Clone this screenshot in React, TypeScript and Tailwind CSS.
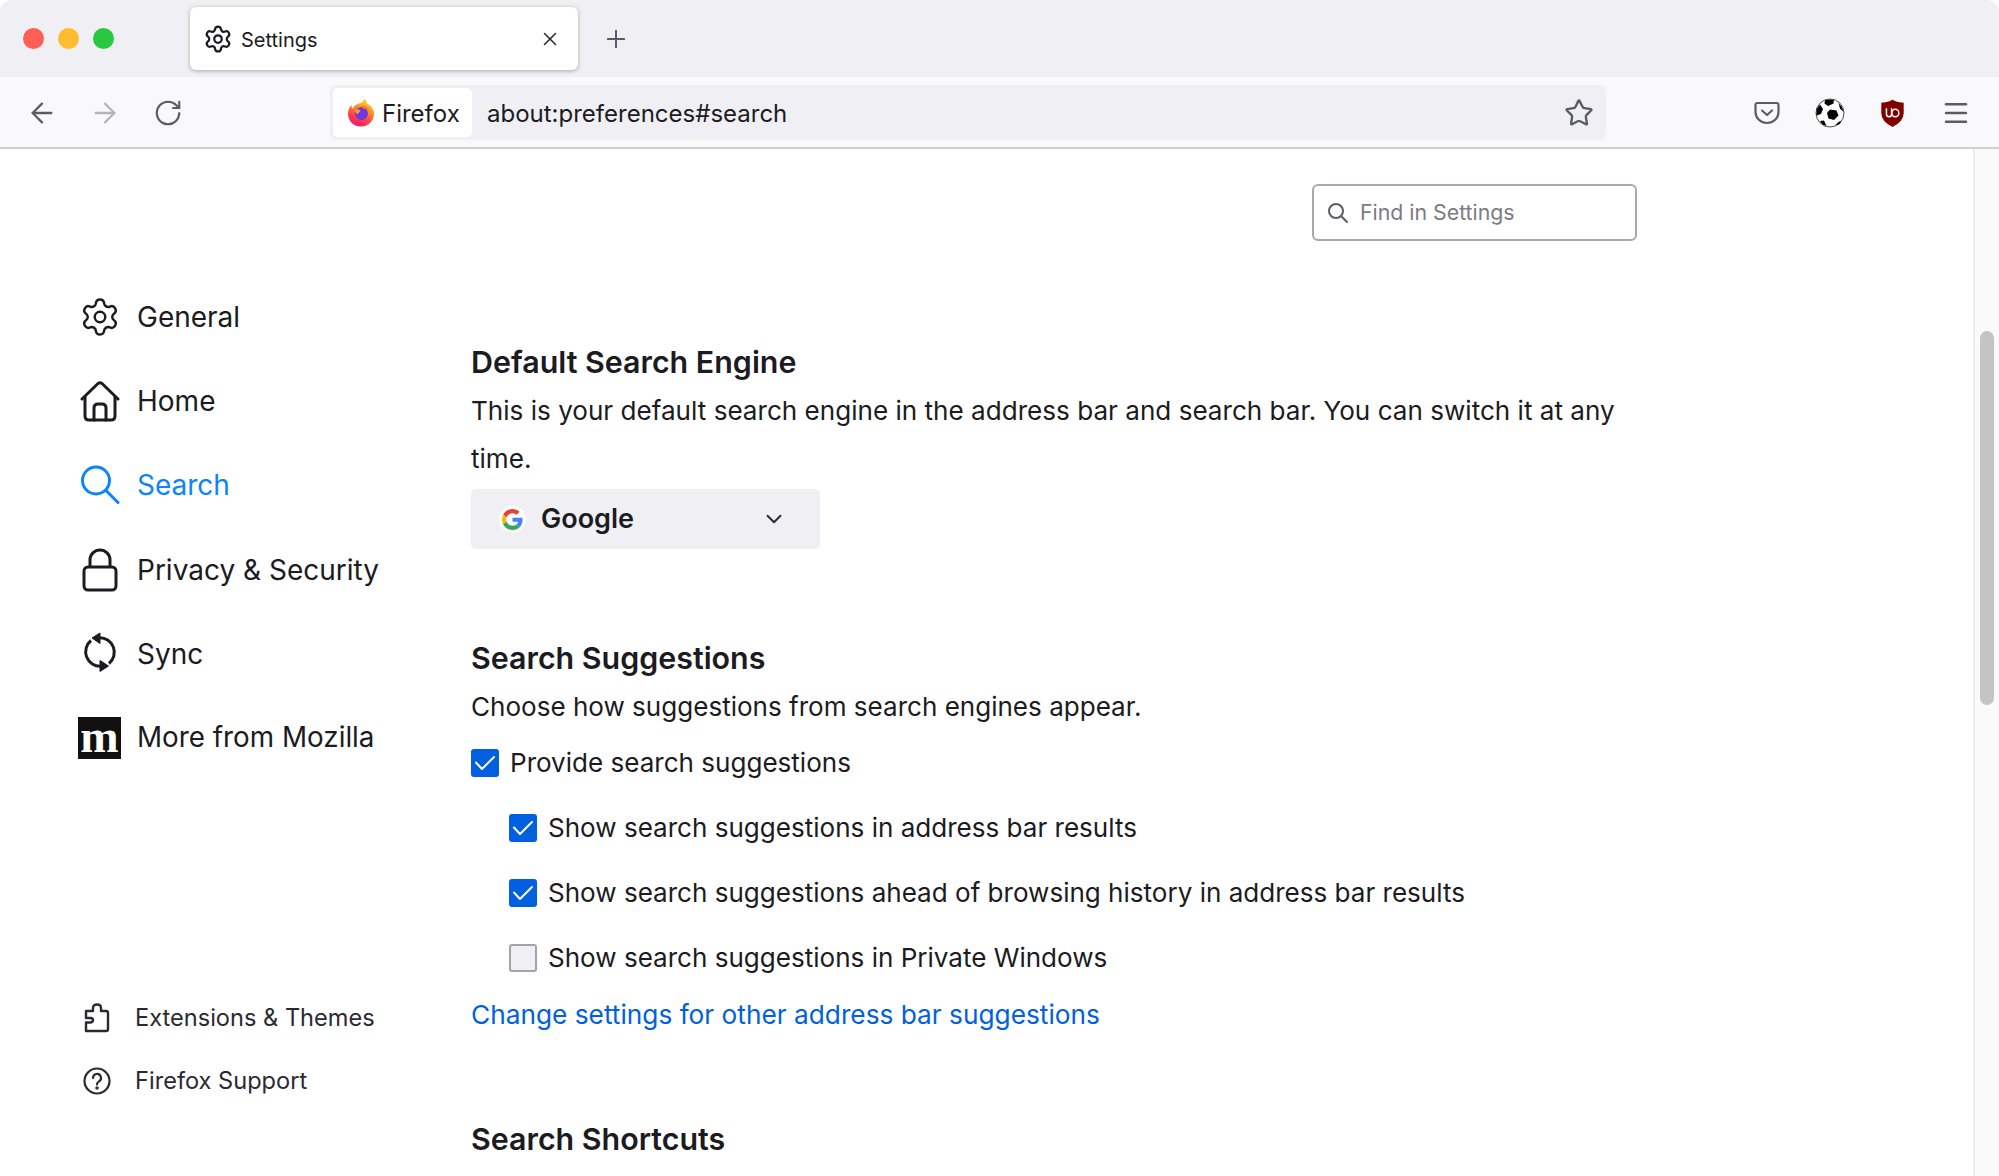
import React from "react";
import { Settings, X, Plus, ArrowLeft, ArrowRight, RotateCw, Star, ChevronDown, Menu } from "lucide-react";

const Gear = ({ size, sw, color = "#1c1b22" }: { size: number; sw: number; color?: string }) => (
  <Settings size={size} strokeWidth={sw} color={color} />
);

const HomeIcon = () => (
  <svg width="40" height="42" viewBox="0 0 40 42" fill="none" stroke="#1c1b22" strokeWidth="3" strokeLinecap="round" strokeLinejoin="round">
    <path d="M2 19 L18 3.5 Q20 2 22 3.5 L38 19" />
    <path d="M5 17 V36 Q5 40 9 40 H31 Q35 40 35 36 V17" />
    <path d="M14 40 V28 Q14 24 18 24 H22 Q26 24 26 28 V40" />
  </svg>
);
const SearchIcon = () => (
  <svg width="40" height="40" viewBox="0 0 40 40" fill="none" stroke="#0a84ff" strokeWidth="3" strokeLinecap="round">
    <circle cx="16" cy="15.5" r="13.5" />
    <path d="M26 25.5 L38 37.5" />
  </svg>
);
const LockIcon = () => (
  <svg width="36" height="44" viewBox="0 0 36 44" fill="none" stroke="#1c1b22" strokeWidth="3">
    <rect x="2" y="19" width="32" height="23" rx="4" />
    <path d="M8 19 V12 a10 10 0 0 1 20 0 V19" />
  </svg>
);
const SyncIcon = () => (
  <svg width="34" height="44" viewBox="0 0 34 44" fill="none" stroke="#1c1b22" strokeWidth="3">
    <path d="M16 5.8 A14.5 14.5 0 0 1 26 31.5" />
    <path d="M18 34.2 A14.5 14.5 0 0 1 8 8.5" />
    <path d="M9 6 L17 1 V11.5 Z" fill="#1c1b22" strokeWidth="1" strokeLinejoin="round" />
    <path d="M25.5 34 L17 28.5 V39.5 Z" fill="#1c1b22" strokeWidth="1" strokeLinejoin="round" />
  </svg>
);
const Puzzle = () => (
  <svg width="26" height="30" viewBox="0 0 26 30" fill="none" stroke="#2b2a33" strokeWidth="2.4" strokeLinejoin="round">
    <path d="M2 28 H22 Q24 28 24 26 V10 Q24 8 22 8 H17 V5 Q17 1.5 13 1.5 Q9 1.5 9 5 V8 H2 V15 H6 Q9 15 9 17 Q9 19.5 6 19.5 H2 V28 Z" />
  </svg>
);
const Help = () => (
  <svg width="28" height="28" viewBox="0 0 28 28" fill="none" stroke="#2b2a33" strokeWidth="2.2" strokeLinecap="round">
    <circle cx="14" cy="14" r="12.5" />
    <path d="M10 11 a4 4 0 1 1 6 3.4 Q14 15.5 14 17.5" />
    <circle cx="14" cy="21" r="0.7" fill="#2b2a33" />
  </svg>
);
const Check = () => (
  <svg width="22" height="16" viewBox="0 0 22 16" fill="none" stroke="#fff" strokeWidth="2" strokeLinecap="round" strokeLinejoin="round">
    <path d="M2 7.5 L8 14 L20 2" />
  </svg>
);
const FirefoxLogo = () => (
  <svg width="28" height="29" viewBox="0 0 28 29">
    <defs>
      <linearGradient id="ffa" x1="0.75" y1="0" x2="0.35" y2="1">
        <stop offset="0" stopColor="#ffe226" />
        <stop offset="0.35" stopColor="#ff9a1f" />
        <stop offset="0.72" stopColor="#ff3d4a" />
        <stop offset="1" stopColor="#f5156c" />
      </linearGradient>
    </defs>
    <path d="M14 28.5 C6 28.5 1 22.5 1 15.5 C1 12 2.5 9 4.5 7 C4.5 9 5 10 6 10.5 C7 7 11 5.5 14 5 C16 3.5 17 2 17.5 0.5 C19 2.5 20 4 20 5.5 C24 7.5 27 11 27 15.5 C27 22.5 21.5 28.5 14 28.5 Z" fill="url(#ffa)" />
    <circle cx="14.5" cy="15.5" r="6.5" fill="#6e3bd8" />
    <path d="M8 12 C10.5 10.5 13 11.5 13.5 13.5 C12 14 11 15 11 16.5 C9.5 15.5 8 14 8 12 Z" fill="#ff9640" />
    <path d="M15 7.5 C19.5 7.5 23 11 23 15.5 C23 12.5 19.5 10 16 11 Z" fill="#ff7a2f" />
  </svg>
);
const GoogleIcon = () => (
  <span className="flex h-[27px] w-[27px] items-center justify-center rounded-full bg-white">
    <svg width="21" height="21" viewBox="0 0 48 48">
      <path fill="#EA4335" d="M24 9.5c3.54 0 6.71 1.22 9.21 3.6l6.85-6.85C35.9 2.38 30.47 0 24 0 14.62 0 6.51 5.38 2.56 13.22l7.98 6.19C12.43 13.72 17.74 9.5 24 9.5z" />
      <path fill="#4285F4" d="M46.98 24.55c0-1.57-.15-3.09-.38-4.55H24v9.02h12.94c-.58 2.96-2.26 5.48-4.78 7.18l7.73 6c4.51-4.18 7.09-10.36 7.09-17.65z" />
      <path fill="#FBBC05" d="M10.53 28.59c-.48-1.45-.76-2.99-.76-4.59s.27-3.14.76-4.59l-7.98-6.19C.92 16.46 0 20.12 0 24c0 3.88.92 7.54 2.56 10.78l7.97-6.19z" />
      <path fill="#34A853" d="M24 48c6.48 0 11.93-2.13 15.89-5.81l-7.73-6c-2.15 1.45-4.92 2.3-8.16 2.3-6.26 0-11.57-4.22-13.47-9.91l-7.98 6.19C6.51 42.62 14.62 48 24 48z" />
    </svg>
  </span>
);
const Pocket = () => (
  <svg width="26" height="24" viewBox="0 0 26 24" fill="none" stroke="#5b5b66" strokeWidth="2.2" strokeLinecap="round" strokeLinejoin="round">
    <path d="M3.5 2 H22.5 Q24.5 2 24.5 4 V11 A11.5 11 0 0 1 1.5 11 V4 Q1.5 2 3.5 2 Z" />
    <path d="M8 9.5 L13 14 L18 9.5" />
  </svg>
);
const Ball = () => (
  <svg width="30" height="30" viewBox="0 0 30 30">
    <circle cx="15" cy="15" r="14" fill="#fff" stroke="#222" strokeWidth="0.8" />
    <path d="M15 11.5 L21.5 12.5 L23.5 17.5 L19 22 L13.5 20.5 L12 15 Z" fill="#000" />
    <path d="M10 2 L19 1.5 L18.5 5.5 L13 8 L9.5 5.5 Z" fill="#000" />
    <path d="M1.5 11 L5 6.5 L8 11 L6 16 L1.5 17.5 Z" fill="#000" />
    <path d="M5 23 L9 22.5 L11.5 28 L7.5 26.5 Z" fill="#000" />
    <path d="M23.5 5 L27 9 L28.5 14 L25 10.5 Z" fill="#000" />
    <path d="M20 27.5 L24 23.5 L26.5 23.5 L24 26.5 Z" fill="#000" />
  </svg>
);
const Ubo = () => (
  <svg width="25" height="28" viewBox="0 0 26 30">
    <path d="M13 0.5 Q15 3 25 4 V15 Q25 24 13 30 Q1 24 1 15 V4 Q11 3 13 0.5 Z" fill="#800000" />
    <path d="M6.5 10 V16 Q6.5 19 9.5 19 Q12 19 12 16 V10" fill="none" stroke="#fff" strokeWidth="1.6" />
    <ellipse cx="16" cy="15" rx="3.8" ry="4" fill="none" stroke="#fff" strokeWidth="1.6" />
  </svg>
);

const SideItem = ({ icon, label, active }: { icon: React.ReactNode; label: string; active?: boolean }) => (
  <div className="flex h-[84.2px] items-center">
    <span className="flex w-[58px] shrink-0 items-center justify-center pr-[16px]">{icon}</span>
    <span className={`text-[28px] ${active ? "text-[#0a84ff]" : "text-[#1c1b22]"}`}>{label}</span>
  </div>
);

const Row = ({ checked, children, nested }: { checked: boolean; children: React.ReactNode; nested?: boolean }) => (
  <div className={`flex items-center gap-[11px] ${nested ? "ml-[38px] h-[65px]" : "h-[48px]"}`}>
    {checked ? (
      <span className="flex h-[28px] w-[28px] items-center justify-center rounded-[3px] bg-[#0060df]">
        <Check />
      </span>
    ) : (
      <span className="h-[28px] w-[28px] rounded-[3px] border-2 border-[#a3a3a9] bg-[#f0f0f4]" />
    )}
    <span className="text-[26.05px] text-[#1c1b22]">{children}</span>
  </div>
);

export default function App() {
  return (
    <div className="flex h-[1176px] w-[1999px] flex-col overflow-hidden rounded-t-[12px] bg-white font-['Inter','Liberation_Sans',sans-serif] text-[#1c1b22]">
      {/* tab strip */}
      <div className="flex h-[77px] shrink-0 items-center bg-[#f0f0f4] pl-[23px]">
        <div className="flex gap-[14px]">
          <span className="h-[21px] w-[21px] rounded-full bg-[#ff5f57]" />
          <span className="h-[21px] w-[21px] rounded-full bg-[#febc2e]" />
          <span className="h-[21px] w-[21px] rounded-full bg-[#28c840]" />
        </div>
        <div className="ml-[76px] flex h-[63px] w-[388px] items-center rounded-[6px] bg-white pl-[13px] pr-[17px] shadow-[0_1px_4px_rgba(0,0,0,0.3)]">
          <Gear size={30} sw={1.8} />
          <span className="ml-[8px] pt-[3px] text-[20px]">Settings</span>
          <X size={22} strokeWidth={1.7} color="#2b2a33" className="ml-auto" />
        </div>
        <Plus size={28} strokeWidth={1.7} color="#5b5b66" className="ml-[24px]" />
      </div>
      {/* nav bar */}
      <div className="flex h-[72px] shrink-0 items-center border-b-2 border-[#cfcfd8] bg-[#f9f9fb] pl-[26px] pt-[1px]">
        <div className="flex items-center gap-[31px]">
          <ArrowLeft size={32} strokeWidth={1.7} color="#5b5b66" />
          <ArrowRight size={32} strokeWidth={1.7} color="#b4b4ba" />
          <RotateCw size={30} strokeWidth={1.7} color="#5b5b66" className="ml-[1px]" />
        </div>
        <div className="ml-[147px] flex h-[55px] w-[1276px] items-center rounded-[6px] bg-[#f0f0f4] pl-[3px] pr-[12px]">
          <div className="flex h-[49px] w-[139px] items-center rounded-[5px] bg-white pl-[14px]">
            <FirefoxLogo />
            <span className="ml-[7px] pt-[2px] text-[24px]">Firefox</span>
          </div>
          <span className="ml-[15px] pt-[2px] text-[24px]">about:preferences#search</span>
          <Star size={30} strokeWidth={1.9} color="#5b5b66" className="ml-auto" />
        </div>
        <div className="ml-[148px] flex items-center">
          <Pocket />
          <span className="ml-[35px]"><Ball /></span>
          <span className="ml-[35px]"><Ubo /></span>
          <Menu size={30} strokeWidth={1.9} color="#5b5b66" className="ml-[36px]" />
        </div>
      </div>
      {/* content */}
      <div className="flex min-h-0 flex-1">
        <div className="flex w-[471px] shrink-0 flex-col pl-[79px] pt-[126px]">
          <SideItem icon={<Gear size={52} sw={1.4} />} label="General" />
          <SideItem icon={<HomeIcon />} label="Home" />
          <SideItem icon={<SearchIcon />} label="Search" active />
          <SideItem icon={<LockIcon />} label="Privacy & Security" />
          <SideItem icon={<SyncIcon />} label="Sync" />
          <div className="flex h-[84.2px] items-center">
            <span className="-ml-[1px] mr-[16px] flex h-[42px] w-[43px] shrink-0 items-end justify-center bg-[#111] pb-[7px] font-['Liberation_Serif',serif] text-[46px] font-bold leading-[30px] text-white">
              m
            </span>
            <span className="text-[27.8px] text-[#1c1b22]">More from Mozilla</span>
          </div>
          <div className="mt-[222px] flex flex-col gap-[31px] text-[23.6px] text-[#2b2a33]">
            <div className="flex h-[32px] items-center">
              <span className="ml-[5px] mr-[25px] flex w-[26px] justify-center"><Puzzle /></span>
              Extensions &amp; Themes
            </div>
            <div className="flex h-[32px] items-center">
              <span className="ml-[4px] mr-[24px] flex w-[28px] justify-center"><Help /></span>
              Firefox Support
            </div>
          </div>
        </div>
        <div className="min-w-0 flex-1">
          <div className="ml-[841px] mt-[35px] flex h-[57px] w-[325px] items-center rounded-[6px] border-2 border-[#a8a8ae] pl-[13px]">
            <svg width="22" height="22" viewBox="0 0 22 22" fill="none" stroke="#5b5b66" strokeWidth="2" strokeLinecap="round">
              <circle cx="9" cy="9" r="7" />
              <path d="M14 14 L20 20" />
            </svg>
            <span className="ml-[11px] pt-[1px] text-[21.3px] text-[#7b7b82]">Find in Settings</span>
          </div>
          <h2 className="mt-[99px] text-[30.4px] font-semibold leading-[44px]">Default Search Engine</h2>
          <p className="mt-[3px] w-[1166px] text-[26.1px] leading-[47.5px]">
            This is your default search engine in the address bar and search bar. You can switch it at any time.
          </p>
          <div className="mt-[7px] flex h-[60px] w-[349px] items-center rounded-[5px] bg-[#f0f0f4] pl-[28px]">
            <GoogleIcon />
            <span className="ml-[15px] text-[27px] font-semibold">Google</span>
            <ChevronDown size={26} strokeWidth={1.8} color="#2b2a33" className="ml-[127px]" />
          </div>
          <h2 className="mt-[87px] text-[30.4px] font-semibold leading-[44px]">Search Suggestions</h2>
          <p className="mt-[3px] text-[26.05px] leading-[47px]">Choose how suggestions from search engines appear.</p>
          <div className="pt-[9px]">
            <Row checked>Provide search suggestions</Row>
          </div>
          <div className="pt-[8px]">
            <Row checked nested>Show search suggestions in address bar results</Row>
            <Row checked nested>Show search suggestions ahead of browsing history in address bar results</Row>
            <Row checked={false} nested>Show search suggestions in Private Windows</Row>
          </div>
          <div className="mt-[1px] text-[26.25px] leading-[47px] text-[#0060df]">Change settings for other address bar suggestions</div>
          <h2 className="mt-[79px] text-[30.4px] font-semibold leading-[44px]">Search Shortcuts</h2>
        </div>
        <div className="flex w-[26px] shrink-0 justify-center border-l-2 border-[#ececec] bg-[#fafafa] pt-[182px]">
          <div className="h-[374px] w-[14px] rounded-full bg-[#c4c4c4]" />
        </div>
      </div>
    </div>
  );
}
